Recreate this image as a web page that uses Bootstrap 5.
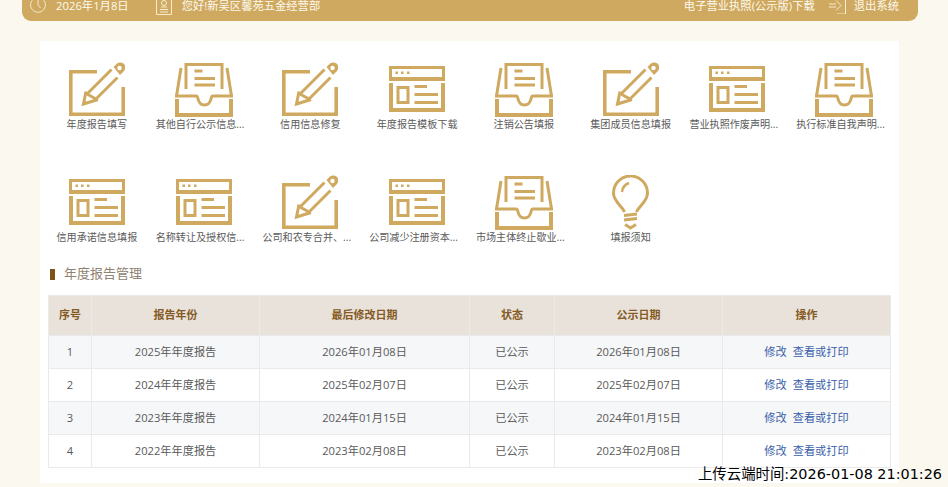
<!DOCTYPE html>
<html lang="zh-CN">
<head>
<meta charset="utf-8">
<title>年度报告</title>
<link href="https://cdn.jsdelivr.net/npm/bootstrap@5.3.0/dist/css/bootstrap.min.css" rel="stylesheet">
<style>
html,body{height:487px;overflow:hidden}
body{background:#fbf8f0;font-family:"Open Sans","Noto Sans CJK SC",sans-serif;font-size:11px;color:#5a5a5a;position:relative}
.topbar{width:896px;height:21px;margin-left:22px;background:#cfa95f;border-radius:0 0 9px 9px;color:#fdf9ef;padding:0 19px 10px 8px;overflow:hidden;font-size:11.3px;line-height:11px}
.topbar svg{flex:none}
.top-date{margin:0 27px 0 10px}
.top-user{margin-left:10px}
.top-lic{margin-right:14px}
.top-out{margin-left:8px}
.sheet{width:859px;height:442px;margin:20px 0 0 40px;background:#fff;padding:19px 8px 0}
.tiles{width:854px;margin-left:-4.5px;row-gap:41px}
.tile{width:12.5%;height:72px;text-align:center;color:#5a5a5a;font-size:10.1px;line-height:14px}
.tile-ic{height:57px}
.tile-ic svg{display:block;color:#cfa95f;position:relative;top:.5px}
.tile-ic .sink{top:1.5px}
.cut{width:96px;margin:0 auto;text-align:left;white-space:nowrap}
.sec-title{height:20px;margin:19px 0 11px 2px;font-size:13px;color:#8f8270}
.sec-mark{width:5px;height:11px;background:#7f5216;margin-right:9px}
.rep{table-layout:fixed;width:842px;margin:0;--bs-table-striped-bg:#f6f7f9;--bs-table-bg:#fff;--bs-border-color:#eaeaea;--bs-table-color:#5a5a5a;--bs-table-striped-color:#5a5a5a;font-size:11.2px;text-align:center}
.rep th,.rep td{padding:0;vertical-align:middle;height:33px}
.rep thead th{height:40px;background:#e8e2da;color:#855a24;font-weight:700;font-size:11px;box-shadow:none}
.c1{width:43px}.c2{width:168px}.c3{width:210px}.c4{width:85px}.c5{width:168px}.c6{width:168px}
.rep a{color:#3a5ea8;text-decoration:none}
.rep a+a{margin-left:6px}
.stamp{position:absolute;right:6px;top:465px;font-family:"DejaVu Sans","Noto Sans CJK SC",sans-serif;font-size:14.4px;line-height:18px;color:#000;white-space:nowrap}
</style>
</head>
<body>
<svg width="0" height="0" class="position-absolute" aria-hidden="true">
  <symbol id="i-pen" viewBox="0 0 56 54">
    <g fill="none" stroke="currentColor" stroke-width="3">
      <path d="M28 9.800H1.800V52.200H54.200V25" stroke-width="3.600"/>
      <path d="M18 32L42.500 7.500M27 37L48.500 15.500M18 32L27 37"/>
      <path d="M17 29.500L14.500 42L29 37.500"/>
    </g>
    <path d="M44.500 5L48 1.500C50 0 53 0 55 2C57 4 56.500 7 55 9L51 13Z" fill="currentColor"/>
    <circle cx="50.500" cy="6" r="2.200" fill="#fff"/>
  </symbol>
  <symbol id="i-box" viewBox="0 0 58 54">
    <g fill="none" stroke="currentColor" stroke-width="3">
      <path d="M2 36V52H56V36" stroke-width="4"/>
      <path d="M0 33H21C22.500 33 22.500 34 23 36C24 40 26 42 29.500 42C33 42 35 40 36 36C36.500 34 36.500 33 38 33H58"/>
      <path d="M1.500 33L6 5M56.500 33L52 5"/>
      <path d="M11 26V1.500H47V26"/>
      <path d="M19.500 8H27.500M19.500 15.500H40M19.500 22H40"/>
    </g>
  </symbol>
  <symbol id="i-win" viewBox="0 0 56 46">
    <g fill="none" stroke="currentColor">
      <rect x="1.500" y="1.500" width="53" height="11" stroke-width="3"/>
      <path d="M2 17V44H54V17" stroke-width="4"/>
      <rect x="9" y="21.500" width="10" height="15" stroke-width="3"/>
      <path d="M25.500 20.500H38M25.500 28.500H49M25.500 36.500H49" stroke-width="3"/>
    </g>
    <path d="M0 12H56V15H0Z" fill="currentColor"/>
    <path d="M6.500 5.500H9V8H6.500ZM12 5.500H14.500V8H12ZM18 5.500H20.500V8H18Z" fill="currentColor"/>
  </symbol>
  <symbol id="i-bulb" viewBox="0 0 37 55">
    <g fill="none" stroke="currentColor" stroke-width="3">
      <path d="M12.500 37C10.500 31 1.500 27 1.500 18A17 17 0 0 1 35.500 18C35.500 27 26.500 31 24.500 37"/>
      <path d="M10 17C10.500 12.500 13 9.500 17 8" stroke-width="2.500"/>
      <path d="M12 40.500L25 39M12 45L25 43.500M13 49.500L18.500 53L24 49.500"/>
    </g>
  </symbol>
</svg>

<header class="topbar d-flex align-items-center">
  <svg width="16" height="18" viewBox="0 0 16 18" fill="none" stroke="#f3e6c8" stroke-width="1"><path d="M4 1.500A7.500 7.500 0 1 0 12 1.500"/><path d="M8 0V8L10.500 11"/></svg>
  <span class="top-date">2026年1月8日</span>
  <svg width="16" height="18" viewBox="0 0 16 18" fill="none" stroke="#f7ecd2" stroke-width="1"><path d="M.5 0V17.500H15.500V0"/><circle cx="8" cy="6" r="2.500"/><path d="M5 10H11M4 12.500H12M4 15H12"/></svg>
  <span class="top-user">您好!新吴区馨苑五金经营部</span>
  <span class="top-lic ms-auto">电子营业执照(公示版)下载</span>
  <svg width="17" height="17" viewBox="0 0 17 17" fill="none" stroke="#f7ecd2" stroke-width="1"><path d="M16.500 0V17H8"/><path d="M0 7H7M0 10H7M7 3.500L12 8.500L7 13.500"/></svg>
  <span class="top-out">退出系统</span>
</header>

<main class="sheet">
  <div class="tiles d-flex flex-wrap">
    <div class="tile"><div class="tile-ic d-flex justify-content-center align-items-center"><svg width="56" height="54"><use href="#i-pen"/></svg></div>年度报告填写</div>
    <div class="tile"><div class="tile-ic d-flex justify-content-center align-items-center"><svg class="sink" width="58" height="54"><use href="#i-box"/></svg></div><div class="cut">其他自行公示信息...</div></div>
    <div class="tile"><div class="tile-ic d-flex justify-content-center align-items-center"><svg width="56" height="54"><use href="#i-pen"/></svg></div>信用信息修复</div>
    <div class="tile"><div class="tile-ic d-flex justify-content-center align-items-center"><svg width="56" height="46"><use href="#i-win"/></svg></div>年度报告模板下载</div>
    <div class="tile"><div class="tile-ic d-flex justify-content-center align-items-center"><svg class="sink" width="58" height="54"><use href="#i-box"/></svg></div>注销公告填报</div>
    <div class="tile"><div class="tile-ic d-flex justify-content-center align-items-center"><svg width="56" height="54"><use href="#i-pen"/></svg></div>集团成员信息填报</div>
    <div class="tile"><div class="tile-ic d-flex justify-content-center align-items-center"><svg width="56" height="46"><use href="#i-win"/></svg></div><div class="cut">营业执照作废声明...</div></div>
    <div class="tile"><div class="tile-ic d-flex justify-content-center align-items-center"><svg class="sink" width="58" height="54"><use href="#i-box"/></svg></div><div class="cut">执行标准自我声明...</div></div>
    <div class="tile"><div class="tile-ic d-flex justify-content-center align-items-center"><svg width="56" height="46"><use href="#i-win"/></svg></div>信用承诺信息填报</div>
    <div class="tile"><div class="tile-ic d-flex justify-content-center align-items-center"><svg width="56" height="46"><use href="#i-win"/></svg></div><div class="cut">名称转让及授权信...</div></div>
    <div class="tile"><div class="tile-ic d-flex justify-content-center align-items-center"><svg width="56" height="54"><use href="#i-pen"/></svg></div><div class="cut">公司和农专合并、...</div></div>
    <div class="tile"><div class="tile-ic d-flex justify-content-center align-items-center"><svg width="56" height="46"><use href="#i-win"/></svg></div><div class="cut">公司减少注册资本...</div></div>
    <div class="tile"><div class="tile-ic d-flex justify-content-center align-items-center"><svg class="sink" width="58" height="54"><use href="#i-box"/></svg></div><div class="cut">市场主体终止歇业...</div></div>
    <div class="tile"><div class="tile-ic d-flex justify-content-center align-items-center"><svg width="37" height="55"><use href="#i-bulb"/></svg></div>填报须知</div>
  </div>

  <div class="sec-title d-flex align-items-center"><span class="sec-mark"></span>年度报告管理</div>

  <table class="table table-bordered table-striped rep">
    <colgroup><col class="c1"><col class="c2"><col class="c3"><col class="c4"><col class="c5"><col class="c6"></colgroup>
    <thead><tr><th>序号</th><th>报告年份</th><th>最后修改日期</th><th>状态</th><th>公示日期</th><th>操作</th></tr></thead>
    <tbody>
      <tr><td>1</td><td>2025年年度报告</td><td>2026年01月08日</td><td>已公示</td><td>2026年01月08日</td><td><a href="#">修改</a><a href="#">查看或打印</a></td></tr>
      <tr><td>2</td><td>2024年年度报告</td><td>2025年02月07日</td><td>已公示</td><td>2025年02月07日</td><td><a href="#">修改</a><a href="#">查看或打印</a></td></tr>
      <tr><td>3</td><td>2023年年度报告</td><td>2024年01月15日</td><td>已公示</td><td>2024年01月15日</td><td><a href="#">修改</a><a href="#">查看或打印</a></td></tr>
      <tr><td>4</td><td>2022年年度报告</td><td>2023年02月08日</td><td>已公示</td><td>2023年02月08日</td><td><a href="#">修改</a><a href="#">查看或打印</a></td></tr>
    </tbody>
  </table>
</main>

<div class="stamp">上传云端时间:2026-01-08 21:01:26</div>
<script src="https://cdn.jsdelivr.net/npm/bootstrap@5.3.0/dist/js/bootstrap.bundle.min.js"></script>
</body>
</html>
